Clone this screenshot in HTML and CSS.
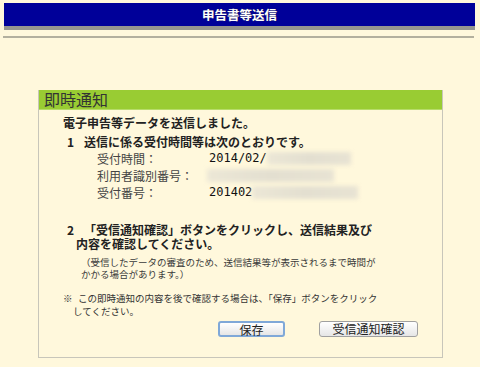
FILE: index.html
```html
<!DOCTYPE html>
<html lang="ja">

<head>
    <meta charset="UTF-8">
    <title>申告書等送信</title>
    <link rel="stylesheet" href="styles.css">
</head>

<body>

    <div class="top-bar">申告書等送信</div>
    <div class="top-rule"></div>

    <div class="panel">
        <div class="panel-title">即時通知</div>
        <div class="panel-body">
            <p class="lead">電子申告等データを送信しました。</p>

            <p class="step"><span class="num">1</span>送信に係る受付時間等は次のとおりです。</p>
            <div class="data">
                <div class="data-row">
                    <span class="label">受付時間：</span>
                    <span class="value">2014/02/<span class="blur" style="width: 84px"></span></span>
                </div>
                <div class="data-row">
                    <span class="label">利用者識別番号：</span>
                    <span class="value"><span class="blur shift" style="width: 127px"></span></span>
                </div>
                <div class="data-row">
                    <span class="label">受付番号：</span>
                    <span class="value">201402<span class="blur" style="width: 106px"></span></span>
                </div>
            </div>

            <p class="step step2"><span class="num">2</span>「受信通知確認」ボタンをクリックし、送信結果及び内容を確認してください。</p>
            <p class="note">（受信したデータの審査のため、送信結果等が表示されるまで時間がかかる場合があります。）</p>

            <p class="remark"><span class="mark">※</span>この即時通知の内容を後で確認する場合は、「保存」ボタンをクリックしてください。</p>

            <div class="buttons">
                <button type="button" class="btn btn-save">保存</button>
                <button type="button" class="btn btn-confirm">受信通知確認</button>
            </div>
        </div>
    </div>

</body>

</html>
```

FILE: styles.css
```css
body {
    font-family: "Noto Sans CJK JP", "DejaVu Sans", sans-serif;
    background-color: #fff8dc;
    color: #222;
    margin: 0;
}

p {
    margin: 0;
}

.top-bar {
    margin: 3px 5px 0 4px;
    height: 23px;
    line-height: 23px;
    background-color: #000099;
    border-bottom: 4px solid #959590;
    color: #fff;
    font-size: 12.5px;
    font-weight: bold;
    text-align: center;
    text-shadow: 0 0 1px #333;
}

.top-rule {
    margin: 6px 6px 0 3px;
    height: 2px;
    background-color: #b3b09e;
}

.panel {
    margin: 52px 0 0 38px;
    width: 403px;
    border: 1px solid #c8c6ba;
    border-top: none;
}

.panel-title {
    height: 19px;
    line-height: 19px;
    background-color: #99cc33;
    border-bottom: 1px solid #b7dc6a;
    padding-left: 5px;
    font-size: 16px;
    color: #333;
}

.panel-body {
    padding: 4px 0 20px 24px;
    font-size: 12px;
}

.lead {
    font-weight: bold;
    line-height: 18px;
}

.step {
    margin-top: 2px;
    font-weight: bold;
    line-height: 16px;
}

.num {
    display: inline-block;
    width: 21px;
    padding-left: 4px;
    box-sizing: border-box;
    text-indent: 0;
}

.step2 {
    margin-top: 22px;
    width: 300px;
    padding-left: 13px;
    text-indent: -13px;
    line-height: 14px;
}

.data {
    margin-left: 34px;
}

.data-row {
    display: flex;
    height: 17px;
    line-height: 17px;
    color: #444;
}

.label {
    width: 112px;
}

.value {
    display: flex;
    align-items: center;
    font-family: "DejaVu Sans Mono", monospace;
    color: #111;
}

.blur {
    display: inline-block;
    height: 13px;
    background: linear-gradient(90deg, #ece7d6, #e3dfd0 50%, #e8e3d3);
    filter: blur(2px);
}

.shift {
    margin-left: -2px;
}

.note {
    margin: 5px 0 0 18px;
    width: 295px;
    font-size: 9.5px;
    line-height: 12px;
    color: #3a3a3a;
}

.remark {
    margin-top: 12px;
    width: 305px;
    padding-left: 10px;
    text-indent: -10px;
    font-size: 9.5px;
    line-height: 13px;
    color: #333;
}

.mark {
    display: inline-block;
    width: 15px;
    text-indent: 0;
}

.buttons {
    display: flex;
    gap: 34px;
    margin: 3px 0 0 155px;
}

.btn {
    height: 16px;
    padding: 0;
    font-family: "Noto Sans CJK JP", sans-serif;
    font-size: 12px;
    line-height: 14px;
    color: #222;
    background: linear-gradient(#ffffff, #e6e6e6);
    border: 1px solid #a0a0a0;
    border-radius: 3px;
}

.btn-save {
    width: 67px;
    border: 2px solid #7fa8d8;
}

.btn-confirm {
    width: 99px;
}
```
